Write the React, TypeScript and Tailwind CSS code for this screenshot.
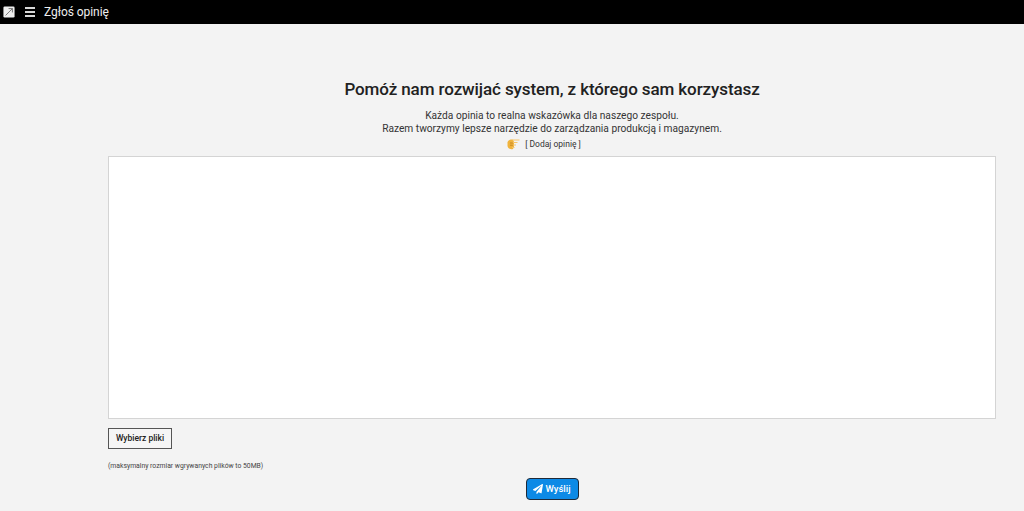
import React from 'react';
import { FaPaperPlane } from 'react-icons/fa';

const sans = "font-['Roboto',sans-serif]";

function Logo() {
  return (
    <svg viewBox="0 0 14 14" className="h-[12px] w-[12px]">
      <rect x="0.5" y="0.5" width="13" height="13" rx="1.5" fill="#eeeeee" />
      <path d="M3 11 L11 3 M6.5 3 H11 V7.5" stroke="#666666" strokeWidth="1" fill="none" />
    </svg>
  );
}

function PointingHand() {
  return (
    <svg viewBox="0 0 13 11" className="h-[11px] w-[13px]">
      <path d="M0.5 3.5 C1 1 4 0 6 0.8 L7 3 V7.5 L6 10 C3.5 11 1 9.5 0.5 7 Z" fill="#f0b33c" />
      <path d="M5.5 1 H12.5 M5.5 3.5 H10.5 M5.5 6 H9 M5 8.5 H7.5" stroke="#f5c56a" strokeWidth="1.1" />
      <path d="M3 4 L6 4 M3 6.2 L6 6.2" stroke="#b87a18" strokeWidth="0.7" />
    </svg>
  );
}

export default function App() {
  return (
    <div className={`flex h-[511px] flex-col overflow-hidden bg-[#f3f3f3] text-[#212529] ${sans}`}>
      {/* Top bar */}
      <header className="flex h-6 shrink-0 items-center bg-black pl-[3px] text-white">
        <span className="flex w-[22px]"><Logo /></span>
        <span className="flex w-[19px] flex-col gap-[2px]">
          <span className="h-[2px] w-[10px] bg-[#d8d8d8]" />
          <span className="h-[2px] w-[10px] bg-[#d8d8d8]" />
          <span className="h-[2px] w-[10px] bg-[#d8d8d8]" />
        </span>
        <span className="text-[12px] leading-none tracking-[-0.05px] text-[#eeeeee]">Zgłoś opinię</span>
      </header>

      {/* Content */}
      <main className="flex flex-col pl-[108px] pr-[28px]">
        <h1 className="mt-[54px] text-center text-[17px] font-medium leading-[22px] tracking-[-0.1px] text-[#212121]">
          Pomóż nam rozwijać system, z którego sam korzystasz
        </h1>
        <p className="mt-[9px] text-center text-[10.2px] leading-[13px] text-[#333333]">
          Każda opinia to realna wskazówka dla naszego zespołu.
          <br />
          Razem tworzymy lepsze narzędzie do zarządzania produkcją i magazynem.
        </p>
        <div className="mt-[2px] flex h-[14px] items-center justify-center gap-[5px] pr-[16px] text-[8.5px] text-[#333333]">
          <PointingHand />
          <span>[ Dodaj opinię ]</span>
        </div>
        <div className="mt-[5px] h-[263px] border border-[#d4d4d4] bg-white" />
        <button className="mt-[9px] h-[21px] w-[64px] border border-[#555555] bg-[#f5f5f5] text-[8.5px] font-medium text-[#222222]">
          Wybierz pliki
        </button>
        <p className="mt-[13px] text-[6.8px] leading-[9px] text-[#444444]">
          (maksymalny rozmiar wgrywanych plików to 50MB)
        </p>
        <div className="mt-[7px] flex justify-center">
          <button className="flex h-[22px] w-[53px] items-center justify-center gap-[2px] rounded-[4px] border border-[#1f2937] bg-[#0d8ae6] text-[9.5px] font-medium text-white">
            <FaPaperPlane className="h-[10px] w-[10px]" />
            Wyślij
          </button>
        </div>
      </main>
    </div>
  );
}
